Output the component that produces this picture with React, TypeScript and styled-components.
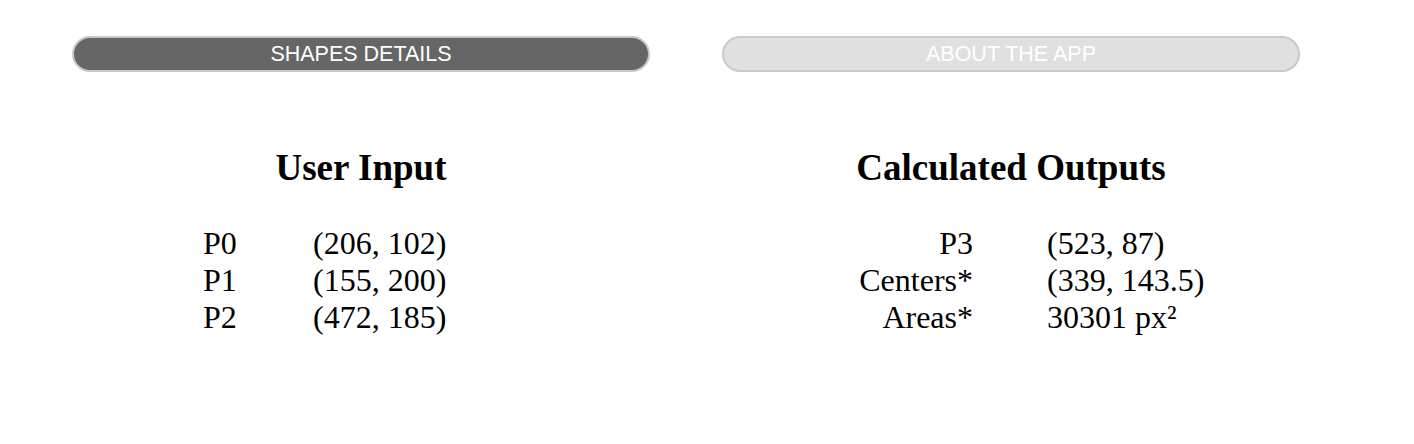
import React, { FunctionComponent } from "react";
import styled, { createGlobalStyle } from "styled-components";

const GlobalStyle = createGlobalStyle`
  body {
    margin: 0;
    background: #ffffff;
    color: #000000;
    font-family: "Liberation Serif", "Times New Roman", serif;
  }
`;

const Page = styled.div`
  display: grid;
  grid-template-columns: 578px 578px;
  column-gap: 72px;
  padding: 36px 72px;
`;

const Column = styled.section`
  display: flex;
  flex-direction: column;
`;

const Tab = styled.button<{ active?: boolean }>`
  height: 36px;
  width: 100%;
  border: 2px solid ${({ active }) => (active ? "#c8c8c8" : "#cacaca")};
  border-radius: 18px;
  background: ${({ active }) => (active ? "#666666" : "#e0e0e0")};
  color: #ffffff;
  font-family: "Liberation Sans", Arial, sans-serif;
  font-size: 21.5px;
  padding: 0;
  cursor: pointer;
`;

const Heading = styled.h2`
  margin: 74px 0 0;
  font-size: 37px;
  line-height: normal;
  font-weight: bold;
  text-align: center;
`;

const Table = styled.div<{ labelWidth: number; gap: number; offset: number; alignRight?: boolean }>`
  display: grid;
  grid-template-columns: ${({ labelWidth }) => `${labelWidth}px`} auto;
  column-gap: ${({ gap }) => `${gap}px`};
  justify-content: start;
  margin: 36px 0 0 ${({ offset }) => `${offset}px`};
  font-size: 32px;
  line-height: 37px;

  & > span:nth-child(odd) {
    text-align: ${({ alignRight }) => (alignRight ? "right" : "left")};
  }
`;

interface Row {
  label: string;
  value: string;
}

const inputs: Row[] = [
  { label: "P0", value: "(206, 102)" },
  { label: "P1", value: "(155, 200)" },
  { label: "P2", value: "(472, 185)" },
];

const outputs: Row[] = [
  { label: "P3", value: "(523, 87)" },
  { label: "Centers*", value: "(339, 143.5)" },
  { label: "Areas*", value: "30301 px²" },
];

const App: FunctionComponent = () => (
  <>
    <GlobalStyle />
    <Page>
      <Column>
        <Tab active>SHAPES DETAILS</Tab>
        <Heading>User Input</Heading>
        <Table labelWidth={110} gap={0} offset={131}>
          {inputs.map((r) => (
            <React.Fragment key={r.label}>
              <span>{r.label}</span>
              <span>{r.value}</span>
            </React.Fragment>
          ))}
        </Table>
      </Column>
      <Column>
        <Tab>ABOUT THE APP</Tab>
        <Heading>Calculated Outputs</Heading>
        <Table labelWidth={251} gap={74} offset={0} alignRight>
          {outputs.map((r) => (
            <React.Fragment key={r.label}>
              <span>{r.label}</span>
              <span>{r.value}</span>
            </React.Fragment>
          ))}
        </Table>
      </Column>
    </Page>
  </>
);

export default App;
